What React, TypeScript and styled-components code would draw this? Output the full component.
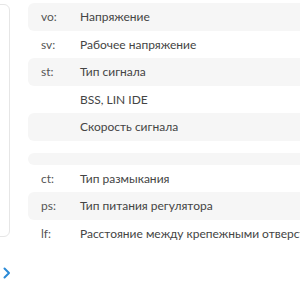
import React from "react";
import styled, { createGlobalStyle } from "styled-components";

type Spec = { code?: string; label?: string };

const specs: Spec[] = [
  { code: "vo:", label: "Напряжение" },
  { code: "sv:", label: "Рабочее напряжение" },
  { code: "st:", label: "Тип сигнала" },
  { label: "BSS, LIN IDE" },
  { label: "Скорость сигнала" },
  {},
  {},
  { code: "ct:", label: "Тип размыкания" },
  { code: "ps:", label: "Тип питания регулятора" },
  { code: "lf:", label: "Расстояние между крепежными отверстиями" },
];

const App: React.FC = () => {
  return (
    <>
      <GlobalStyle />
      <Page>
        <Layout>
          <Side>
            <Card />
            <Arrow viewBox="0 0 8 12">
              <path d="M1.5 1.5 L6 6 L1.5 10.5" />
            </Arrow>
          </Side>
          <Table>
            {specs.map((s, i) => (
              <Row key={i} $striped={i % 2 === 0} $empty={!s.label}>
                <Code>{s.code}</Code>
                <Value>{s.label}</Value>
              </Row>
            ))}
          </Table>
        </Layout>
      </Page>
    </>
  );
};

const GlobalStyle = createGlobalStyle`
  body {
    margin: 0;
    background: #fff;
    font-family: Lato, "Open Sans", sans-serif;
  }
`;

const Page = styled.div`
  width: 300px;
  height: 300px;
  overflow: hidden;
`;

const Layout = styled.div`
  display: flex;
  align-items: flex-start;
  gap: 17px;
  padding-top: 3px;
`;

const Side = styled.div`
  display: flex;
  flex-direction: column;
  margin-left: -40px;
  flex-shrink: 0;
`;

const Card = styled.div`
  width: 50px;
  height: 233px;
  margin-top: 1px;
  border: 1px solid #e6e6e6;
  border-radius: 6px;
  box-sizing: border-box;
`;

const Arrow = styled.svg`
  width: 8px;
  height: 12px;
  margin: 30px 0 0 43px;
  fill: none;
  stroke: #2b8ad6;
  stroke-width: 2;
  stroke-linecap: round;
  stroke-linejoin: round;
`;

const Table = styled.div`
  display: flex;
  flex-direction: column;
  width: 340px;
  flex-shrink: 0;
`;

const Row = styled.div<{ $striped: boolean; $empty: boolean }>`
  display: grid;
  grid-template-columns: 39px 1fr;
  align-items: center;
  padding: ${(p) => (p.$empty ? "6px" : "5px")} 13px;
  height: ${(p) => (p.$empty ? "12px" : "27.5px")};
  box-sizing: border-box;
  border-radius: 6px;
  background: ${(p) => (p.$striped ? "#f6f6f6" : "transparent")};
  font-size: 12px;
  line-height: 17.5px;
  color: #444;
  white-space: nowrap;
`;

const Code = styled.span`
  color: #555;
`;

const Value = styled.span`
  color: #444;
`;

export default App;
